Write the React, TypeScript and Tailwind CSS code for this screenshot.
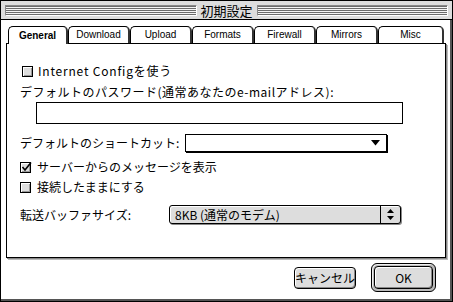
import React from "react";

const stripes =
  "h-[11px] flex-1 bg-[repeating-linear-gradient(to_bottom,#6b6b6b_0px,#6b6b6b_1px,#f4f4f4_1px,#f4f4f4_2px)] border-r border-b border-[#ffffff] border-t border-l border-t-[#888] border-l-[#888]";

const tabs = [
  { label: "General", w: "w-[60px]", active: true },
  { label: "Download", w: "w-[62px]" },
  { label: "Upload", w: "w-[62px]" },
  { label: "Formats", w: "w-[62px]" },
  { label: "Firewall", w: "w-[62px]" },
  { label: "Mirrors", w: "w-[62px]" },
  { label: "Misc", w: "w-[66px]" },
];

function Checkbox({ checked }: { checked?: boolean }) {
  return (
    <div className="relative w-[11px] h-[11px] border border-black bg-[#dddddd] shadow-[inset_1px_1px_0_#ffffff,inset_-1px_-1px_0_#999999] shrink-0">
      {checked && (
        <svg className="absolute -top-[2px] left-0" width="12" height="12" viewBox="0 0 12 12">
          <path d="M1.5 6 L4 9 L10 1.5" fill="none" stroke="#000" strokeWidth="1.6" />
        </svg>
      )}
    </div>
  );
}

export default function App() {
  return (
    <div className="w-[453px] h-[302px] overflow-hidden bg-[#dddddd] font-['Noto_Sans_CJK_JP','Liberation_Sans',sans-serif] text-black">
      <div className="w-[453px] h-[302px] border border-black flex flex-col bg-white shadow-[inset_-2px_-2px_0_#555]">
        {/* Title bar */}
        <div className="h-[19px] bg-[#dddddd] border-b border-black flex items-center px-[4px] gap-[3px] shrink-0">
          <div className={stripes} />
          <span className="text-[13px] leading-none px-[1px]">初期設定</span>
          <div className={stripes} />
        </div>

        <div className="flex-1 flex flex-col px-[5px] pt-[6px]">
          {/* Tabs */}
          <div className="flex h-[17px] pl-[2px] relative z-10">
            {tabs.map((t) => (
              <div
                key={t.label}
                className={`${t.w} h-[17px] rounded-t-[5px] border border-black border-r-[2px] border-r-[#333] flex items-center justify-center text-[10px] leading-none font-['Liberation_Sans',sans-serif] bg-white ${
                  t.active ? "font-bold border-b-0 h-[18px]" : "border-b-0"
                }`}
              >
                {t.label}
              </div>
            ))}
          </div>

          {/* Panel */}
          <div className="h-[215px] w-[440px] border border-black shadow-[1px_1px_0_#888,2px_2px_0_#bbb] bg-white flex flex-col pl-[13px] text-[12px] leading-none whitespace-nowrap">
            <div className="mt-[20px] h-[14px] flex items-center gap-[5px] pl-[2px]">
              <Checkbox />
              <span className="tracking-[0.8px]">Internet Configを使う</span>
            </div>
            <div className="mt-[7px] h-[14px] flex items-center tracking-[0.5px]">
              デフォルトのパスワード(通常あなたのe-mailアドレス):
            </div>
            <div className="mt-[3px] ml-[16px] w-[367px] h-[22px] border border-black bg-white" />
            <div className="mt-[10px] h-[18px] flex items-center">
              <span className="w-[165px] shrink-0">デフォルトのショートカット:</span>
              <div className="w-[202px] h-[18px] border border-black shadow-[1px_1px_0_#000] bg-white flex items-center justify-end pr-[6px]">
                <svg width="9" height="6" viewBox="0 0 9 6">
                  <path d="M0 0 H9 L4.5 5.5 Z" fill="#000" />
                </svg>
              </div>
            </div>
            <div className="mt-[8px] h-[14px] flex items-center gap-[6px]">
              <Checkbox checked />
              <span>サーバーからのメッセージを表示</span>
            </div>
            <div className="mt-[6px] h-[14px] flex items-center gap-[6px]">
              <Checkbox />
              <span>接続したままにする</span>
            </div>
            <div className="mt-[11px] h-[19px] flex items-center">
              <span className="w-[149px] shrink-0">転送バッファサイズ:</span>
              <div className="w-[232px] h-[19px] rounded-[3px] border border-black bg-[#dddddd] shadow-[inset_1px_1px_0_#fff,1px_1px_0_#888] flex items-center">
                <span className="flex-1 pl-[5px]">8KB (通常のモデム)</span>
                <div className="w-[20px] h-full border-l border-black flex items-center justify-center">
                  <svg width="7" height="11" viewBox="0 0 7 11">
                    <path d="M3.5 0 L7 4 H0 Z M0 7 H7 L3.5 11 Z" fill="#000" />
                  </svg>
                </div>
              </div>
            </div>
          </div>

          {/* Buttons */}
          <div className="flex justify-end items-center gap-[15px] pr-[11px] mt-[5px]">
            <div className="w-[62px] h-[22px] rounded-[4px] border border-black bg-[#dddddd] shadow-[inset_1px_1px_0_#fff,inset_-1px_-1px_0_#888] flex items-center justify-center text-[12px] leading-none whitespace-nowrap">
              キャンセル
            </div>
            <div className="w-[65px] h-[29px] rounded-[6px] border border-black bg-[#bbbbbb] p-[2px] shadow-[inset_1px_1px_0_#eee]">
              <div className="w-full h-full rounded-[4px] border border-black bg-[#dddddd] shadow-[inset_1px_1px_0_#fff,inset_-1px_-1px_0_#888] flex items-center justify-center text-[12px] leading-none">
                OK
              </div>
            </div>
          </div>
        </div>
      </div>
    </div>
  );
}
